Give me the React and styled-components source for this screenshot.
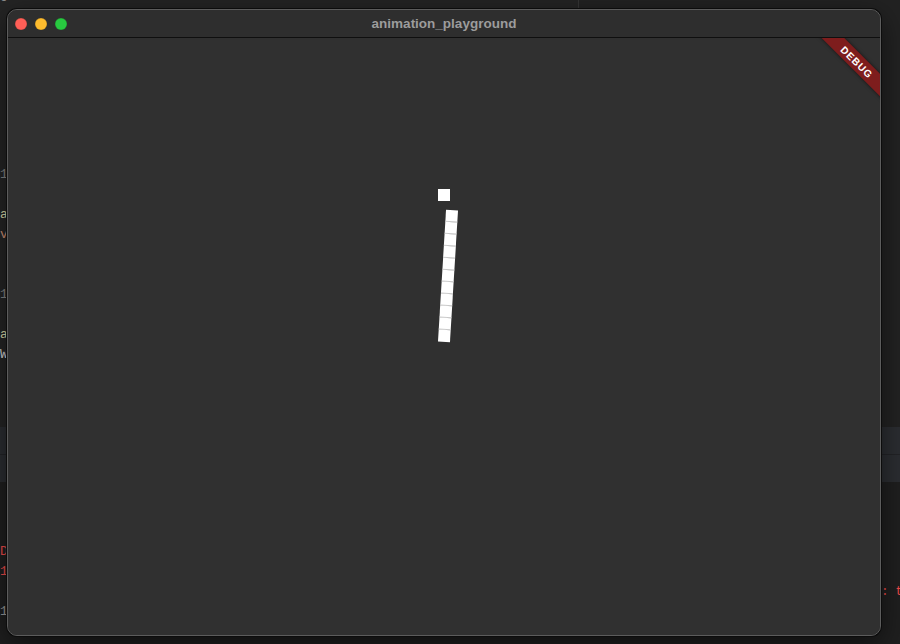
import React from "react";
import styled, { createGlobalStyle } from "styled-components";

const Global = createGlobalStyle`
  html, body { margin: 0; padding: 0; background: #1e1e1e; }
  #root { width: 900px; height: 644px; }
`;

const Desktop = styled.div`
  position: relative;
  width: 900px;
  height: 644px;
  overflow: hidden;
  background: #1f1f1f;
  font-family: "Liberation Mono", "DejaVu Sans Mono", monospace;
  font-size: 13px;
`;

const Layout = styled.div`
  display: flex;
  flex-direction: column;
  height: 100%;
`;

const TopArea = styled.div`
  display: flex;
  height: 427px;
  overflow: hidden;
`;

const Pane = styled.div`
  width: ${(p) => p.$w || "auto"};
  flex: ${(p) => (p.$w ? "none" : 1)};
  background: ${(p) => p.$bg};
  margin-top: ${(p) => p.$mt || 0}px;
`;

const Divider = styled.div`
  width: 1px;
  background: #353535;
`;

const Line = styled.div`
  height: 20px;
  line-height: 20px;
  white-space: nowrap;
  color: ${(p) => p.$c || "#858585"};
`;

const Span = styled.span`
  color: ${(p) => p.$c};
  padding-left: ${(p) => p.$pl || 0}px;
  font-size: ${(p) => p.$fs || 13}px;
`;

const Band = styled.div`
  height: 55px;
  display: flex;
  flex-direction: column;
  background: #2b2d31;
`;

const BandRow = styled.div`
  flex: 1;
  border-bottom: ${(p) => (p.$line ? "1px solid #222326" : "none")};
`;

const Console = styled.div`
  flex: 1;
  background: #1f1f1f;
`;

const Window = styled.div`
  position: absolute;
  left: 7px;
  top: 9px;
  width: 874px;
  height: 627px;
  box-sizing: border-box;
  border-radius: 10px;
  border: 1px solid #5c5c5c;
  box-shadow: 0 0 0 1px #0c0c0c, 0 8px 28px rgba(0, 0, 0, 0.55);
  background: #303030;
  display: flex;
  flex-direction: column;
  overflow: hidden;
`;

const TitleBar = styled.div`
  position: relative;
  height: 27px;
  flex: none;
  background: #2e2e2e;
  border-bottom: 1px solid #0f0f0f;
  display: flex;
  align-items: center;
  padding-left: 7px;
  gap: 8px;
`;

const Light = styled.div`
  width: 12px;
  height: 12px;
  border-radius: 50%;
  background: ${(p) => p.$c};
  box-shadow: inset 0 0 0 0.5px rgba(0, 0, 0, 0.2);
`;

const Title = styled.div`
  position: absolute;
  left: 0;
  right: 0;
  text-align: center;
  font-family: "Liberation Sans", Arial, sans-serif;
  font-weight: 700;
  font-size: 13.5px;
  color: #9c9c9c;
  pointer-events: none;
`;

const Content = styled.div`
  position: relative;
  flex: 1;
  background: #303030;
`;

const Square = styled.div`
  position: absolute;
  left: 430px;
  top: 151px;
  width: 12px;
  height: 12px;
  background: #ffffff;
`;

const Stack = styled.div`
  position: absolute;
  left: 434px;
  top: 172px;
  width: 12px;
  display: flex;
  flex-direction: column;
  transform: rotate(3.5deg);
  transform-origin: center;
`;

const Cell = styled.div`
  width: 12px;
  height: 12px;
  box-sizing: border-box;
  background: #ffffff;
  border-bottom: ${(p) => (p.$last ? "none" : "1px solid #c8c8c8")};
`;

const BannerClip = styled.div`
  position: absolute;
  top: 0;
  right: 0;
  width: 80px;
  height: 80px;
  overflow: hidden;
`;

const Ribbon = styled.div`
  position: absolute;
  left: -3px;
  top: 16px;
  width: 120px;
  height: 16px;
  background: #7e1d1d;
  box-shadow: 0 0 4px rgba(0, 0, 0, 0.6);
  transform: rotate(45deg);
  display: flex;
  align-items: center;
  justify-content: center;
  color: #fff;
  font-family: "Liberation Sans", Arial, sans-serif;
  font-weight: 700;
  font-size: 10px;
  letter-spacing: 0.9px;
`;

const codeLines = [
  [["      g", "#9a9a9a"], ["     ,", "#ce9178"]],
  [], [], [], [], [], [], [], [],
  [["1", "#858585"]],
  [],
  [["a", "#dcdcaa"]],
  [["v", "#ce9178"]],
  [], [],
  [["1", "#858585"]],
  [],
  [["a", "#dcdcaa"]],
  [["W", "#d4d4d4"]],
];

export default function App() {
  const cells = Array.from({ length: 11 });
  return (
    <Desktop>
      <Global />
      <Layout>
        <TopArea>
          <Pane $w="578px" $bg="#242424" $mt={-15}>
            {codeLines.map((segs, i) => (
              <Line key={i}>
                {segs.map(([t, c], j) => (
                  <Span key={j} $c={c}>
                    {t}
                  </Span>
                ))}
              </Line>
            ))}
          </Pane>
          <Divider />
          <Pane $bg="#222222" />
        </TopArea>
        <Band>
          <BandRow $line />
          <BandRow />
        </Band>
        <Console>
          <Line />
          <Line />
          <Line />
          <Line $c="#f14c4c">D</Line>
          <Line $c="#f14c4c">1</Line>
          <Line>
            <Span $c="#f14c4c" $pl={874} $fs={12}>
              s: t
            </Span>
          </Line>
          <Line $c="#9a9a9a">1</Line>
        </Console>
      </Layout>

      <Window>
        <TitleBar>
          <Light $c="#ff5f57" />
          <Light $c="#febc2e" />
          <Light $c="#28c840" />
          <Title>animation_playground</Title>
        </TitleBar>
        <Content>
          <Square />
          <Stack>
            {cells.map((_, i) => (
              <Cell key={i} $last={i === cells.length - 1} />
            ))}
          </Stack>
          <BannerClip>
            <Ribbon>DEBUG</Ribbon>
          </BannerClip>
        </Content>
      </Window>
    </Desktop>
  );
}
